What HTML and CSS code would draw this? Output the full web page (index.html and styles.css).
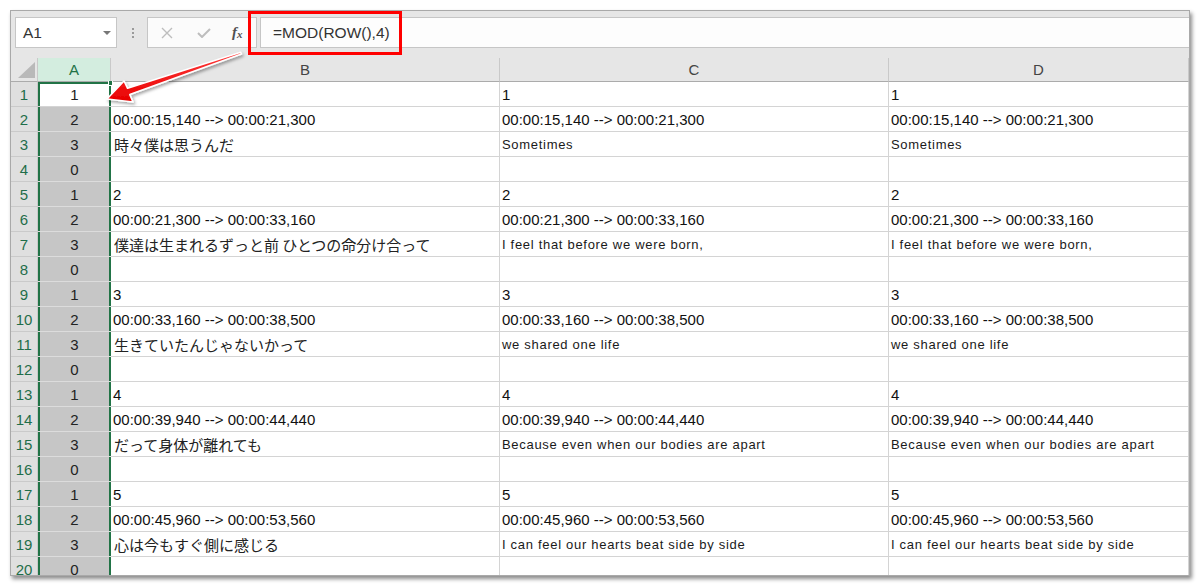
FILE: index.html
```html
<!DOCTYPE html>
<html lang="ja">
<head>
<meta charset="utf-8">
<title>Excel MOD(ROW(),4)</title>
<link rel="stylesheet" href="styles.css">
</head>
<body>
<div class="frame">
  <div class="toolbar">
    <div class="namebox"><span class="nb-text">A1</span><span class="nb-arrow"></span></div>
    <div class="dots"><i></i><i></i><i></i></div>
    <div class="fxbox">
      <svg class="ic-x" width="12" height="12" viewBox="0 0 12 12"><path d="M1 1L11 11M11 1L1 11" stroke="#bdbdbd" stroke-width="1.4" fill="none"/></svg>
      <svg class="ic-check" width="14" height="10" viewBox="0 0 14 10"><path d="M1 5L5 9L13 1" stroke="#bdbdbd" stroke-width="2" fill="none"/></svg>
      <span class="ic-fx">f<sub>x</sub></span>
    </div>
    <div class="formula">=MOD(ROW(),4)</div>
  </div>
  <div class="sheet">
    <div class="hd corner"><span class="tri"></span></div>
    <div class="hd hd-a">A</div>
    <div class="hd">B</div>
    <div class="hd">C</div>
    <div class="hd">D</div>

    <div class="rh">1</div><div class="ca a1">1<span class="handle"></span></div><div class="c">1</div><div class="c">1</div><div class="c">1</div>
    <div class="rh">2</div><div class="ca">2</div><div class="c">00:00:15,140 --&gt; 00:00:21,300</div><div class="c">00:00:15,140 --&gt; 00:00:21,300</div><div class="c">00:00:15,140 --&gt; 00:00:21,300</div>
    <div class="rh">3</div><div class="ca">3</div><div class="c ja">時々僕は思うんだ</div><div class="c en">Sometimes</div><div class="c en">Sometimes</div>
    <div class="rh">4</div><div class="ca">0</div><div class="c"></div><div class="c"></div><div class="c"></div>
    <div class="rh">5</div><div class="ca">1</div><div class="c">2</div><div class="c">2</div><div class="c">2</div>
    <div class="rh">6</div><div class="ca">2</div><div class="c">00:00:21,300 --&gt; 00:00:33,160</div><div class="c">00:00:21,300 --&gt; 00:00:33,160</div><div class="c">00:00:21,300 --&gt; 00:00:33,160</div>
    <div class="rh">7</div><div class="ca">3</div><div class="c ja">僕達は生まれるずっと前 ひとつの命分け合って</div><div class="c en">I feel that before we were born,</div><div class="c en">I feel that before we were born,</div>
    <div class="rh">8</div><div class="ca">0</div><div class="c"></div><div class="c"></div><div class="c"></div>
    <div class="rh">9</div><div class="ca">1</div><div class="c">3</div><div class="c">3</div><div class="c">3</div>
    <div class="rh">10</div><div class="ca">2</div><div class="c">00:00:33,160 --&gt; 00:00:38,500</div><div class="c">00:00:33,160 --&gt; 00:00:38,500</div><div class="c">00:00:33,160 --&gt; 00:00:38,500</div>
    <div class="rh">11</div><div class="ca">3</div><div class="c ja">生きていたんじゃないかって</div><div class="c en">we shared one life</div><div class="c en">we shared one life</div>
    <div class="rh">12</div><div class="ca">0</div><div class="c"></div><div class="c"></div><div class="c"></div>
    <div class="rh">13</div><div class="ca">1</div><div class="c">4</div><div class="c">4</div><div class="c">4</div>
    <div class="rh">14</div><div class="ca">2</div><div class="c">00:00:39,940 --&gt; 00:00:44,440</div><div class="c">00:00:39,940 --&gt; 00:00:44,440</div><div class="c">00:00:39,940 --&gt; 00:00:44,440</div>
    <div class="rh">15</div><div class="ca">3</div><div class="c ja">だって身体が離れても</div><div class="c en">Because even when our bodies are apart</div><div class="c en">Because even when our bodies are apart</div>
    <div class="rh">16</div><div class="ca">0</div><div class="c"></div><div class="c"></div><div class="c"></div>
    <div class="rh">17</div><div class="ca">1</div><div class="c">5</div><div class="c">5</div><div class="c">5</div>
    <div class="rh">18</div><div class="ca">2</div><div class="c">00:00:45,960 --&gt; 00:00:53,560</div><div class="c">00:00:45,960 --&gt; 00:00:53,560</div><div class="c">00:00:45,960 --&gt; 00:00:53,560</div>
    <div class="rh">19</div><div class="ca">3</div><div class="c ja">心は今もすぐ側に感じる</div><div class="c en">I can feel our hearts beat side by side</div><div class="c en">I can feel our hearts beat side by side</div>
    <div class="rh">20</div><div class="ca">0</div><div class="c"></div><div class="c"></div><div class="c"></div>
  </div>
</div>

<div class="redbox"></div>
<svg class="arrow" width="1200" height="586" viewBox="0 0 1200 586">
  <defs>
    <filter id="sh" x="-20%" y="-20%" width="140%" height="140%">
      <feDropShadow dx="1.5" dy="2" stdDeviation="1.5" flood-color="#000" flood-opacity="0.35"/>
    </filter>
    <linearGradient id="rg" x1="0" y1="0" x2="0" y2="1">
      <stop offset="0" stop-color="#ff3a3a"/>
      <stop offset="1" stop-color="#e80000"/>
    </linearGradient>
  </defs>
  <polygon filter="url(#sh)" fill="url(#rg)" stroke="#fff" stroke-width="1.6" stroke-linejoin="round"
    points="107,99 124,81 127.6,88.3 240.6,52.2 241.4,54.0 129.8,94.6 133,102"/>
</svg>
</body>
</html>
```

FILE: styles.css
```css
* { box-sizing: border-box; }

html, body {
  margin: 0;
  padding: 0;
  background: #ffffff;
}

body {
  width: 1200px;
  height: 586px;
  overflow: hidden;
  position: relative;
  font-family: "Liberation Sans", "Noto Sans CJK JP", sans-serif;
}

.frame {
  margin: 10px 0 0 10px;
  width: 1180px;
  height: 566px;
  border: 1px solid #a9a9a9;
  background: #e6e6e6;
  box-shadow: 2px 3px 4px rgba(0, 0, 0, 0.45);
  overflow: hidden;
}

/* ---------- toolbar / formula bar ---------- */
.toolbar {
  height: 47px;
  padding: 6px 0 0 4px;
  display: flex;
  align-items: flex-start;
}

.namebox {
  width: 102px;
  height: 31px;
  background: #ffffff;
  border: 1px solid #c6c6c6;
  display: flex;
  align-items: center;
  justify-content: space-between;
  padding: 0 5px 0 7px;
}

.nb-text {
  font-size: 15.5px;
  color: #333;
}

.nb-arrow {
  width: 0;
  height: 0;
  border-left: 4px solid transparent;
  border-right: 4px solid transparent;
  border-top: 4px solid #777;
  margin-top: 1px;
}

.dots {
  width: 30px;
  height: 31px;
  display: flex;
  flex-direction: column;
  align-items: center;
  justify-content: center;
  gap: 2px;
  padding-left: 1px;
}

.dots i {
  display: block;
  width: 2px;
  height: 2px;
  background: #9a9a9a;
}

.fxbox {
  width: 110px;
  height: 31px;
  background: #fbfbfb;
  border: 1px solid #c6c6c6;
  display: flex;
  align-items: center;
  padding-left: 12px;
}

.ic-x { margin-left: 1px; }
.ic-check { margin-left: 24px; }

.ic-fx {
  margin-left: 21px;
  font-family: "Liberation Serif", "DejaVu Serif", serif;
  font-style: italic;
  font-weight: bold;
  font-size: 15px;
  color: #505050;
  line-height: 1;
}

.ic-fx sub {
  font-size: 11px;
  vertical-align: -1px;
}

.formula {
  flex: 1;
  height: 31px;
  margin-left: 3px;
  background: #fdfdfd;
  border: 1px solid #c6c6c6;
  border-right: 0;
  font-size: 15.5px;
  color: #333;
  line-height: 29px;
  padding-left: 12px;
}

/* ---------- sheet grid ---------- */
.sheet {
  display: grid;
  grid-template-columns: 27px 73px 389px 389px 1fr;
  grid-template-rows: 24px;
  grid-auto-rows: 25px;
}

.hd {
  background: #e6e6e6;
  border-right: 1px solid #c9c9c9;
  border-bottom: 1px solid #ababab;
  font-size: 15px;
  color: #444;
  text-align: center;
  line-height: 24px;
}

.corner {
  position: relative;
}

.tri {
  position: absolute;
  right: 2px;
  bottom: 3px;
  width: 0;
  height: 0;
  border-left: 17px solid transparent;
  border-bottom: 16px solid #b9b9b9;
}

.hd-a {
  background: #d3eddf;
  color: #217346;
}

.rh {
  background: #dfdfdf;
  border-right: 1px solid #c9c9c9;
  border-bottom: 1px solid #cacaca;
  color: #1f6e4a;
  font-size: 15px;
  text-align: center;
  line-height: 26px;
}

.ca {
  background: #c6c6c6;
  border-bottom: 1px solid #dcdcdc;
  color: #222;
  font-size: 15px;
  text-align: center;
  line-height: 26px;
  box-shadow: inset 2px 0 0 #217346, inset -2px 0 0 #217346;
}

.a1 {
  position: relative;
  background: #ffffff;
  border-bottom: 1px solid #d4d4d4;
  box-shadow: inset 2px 0 0 #217346, inset -2px 0 0 #217346, inset 0 2px 0 #217346;
}

.handle {
  position: absolute;
  right: -2px;
  top: -1px;
  width: 5px;
  height: 5px;
  background: #217346;
  border: 1px solid #ffffff;
  border-top: 0;
}

.c {
  background: #ffffff;
  border-right: 1px solid #d4d4d4;
  border-bottom: 1px solid #d4d4d4;
  font-size: 15px;
  color: #111;
  line-height: 26px;
  padding-left: 2px;
  white-space: nowrap;
  overflow: hidden;
}

.ja {
  font-family: "Noto Sans CJK JP", sans-serif;
  font-size: 15px;
  line-height: 25px;
  padding-left: 3px;
  color: #222;
}

.en {
  font-size: 13px;
  letter-spacing: 0.7px;
  color: #1a1a1a;
}

/* ---------- annotations ---------- */
.redbox {
  position: absolute;
  left: 248px;
  top: 11px;
  width: 154px;
  height: 44px;
  border: 3px solid #ff0000;
}

.arrow {
  position: absolute;
  left: 0;
  top: 0;
  pointer-events: none;
}
```
